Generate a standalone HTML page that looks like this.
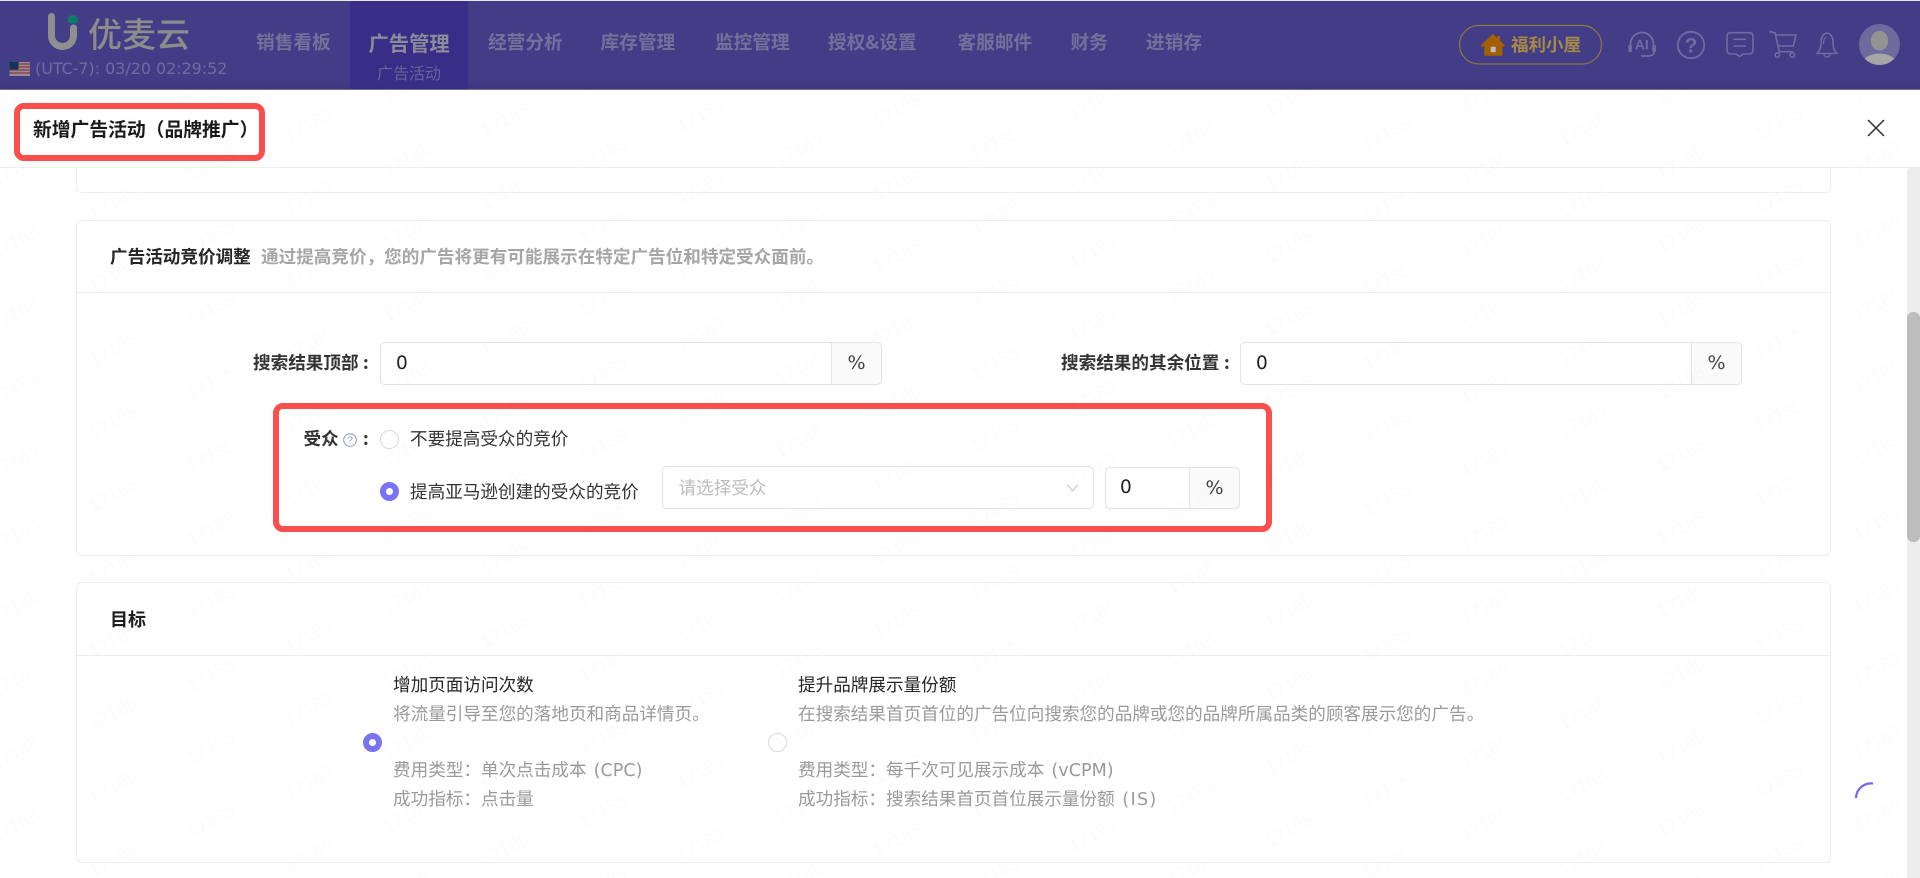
<!DOCTYPE html>
<html lang="zh">
<head>
<meta charset="utf-8">
<title>新增广告活动（品牌推广）</title>
<style>
html,body{margin:0;padding:0;width:1920px;height:878px;overflow:hidden;background:#fff}
body{position:relative;font-family:"DejaVu Sans","Noto Sans CJK SC",sans-serif;font-size:17.6px;color:#333}
.t{position:absolute;white-space:nowrap;line-height:24px;height:24px}
.b{font-weight:700}
.nav{position:absolute;top:30px;white-space:nowrap;line-height:24px;font-size:18.7px;font-weight:700;color:#72719a;font-family:"Noto Sans CJK SC",sans-serif}
.box{position:absolute;box-sizing:border-box;border:1px solid #eee;border-radius:6px}
.inp{position:absolute;box-sizing:border-box;border:1px solid #e3e3e3;border-radius:5px;background:transparent}
.add{position:absolute;box-sizing:border-box;border:1px solid #e3e3e3;border-radius:0 5px 5px 0;background:#fafafa;text-align:center;color:#444;font-size:19px}
.red{position:absolute;box-sizing:border-box;border:6px solid #fa4f4d;border-radius:10px}
.radio{position:absolute;box-sizing:border-box;width:19px;height:19px;border-radius:50%;border:1px solid #d9d9d9;background:#fff}
.radio.on{border:6.5px solid #7a73f6}
.h{font-family:"Noto Sans CJK SC",sans-serif}
.g{color:#9a9a9a}
.num{color:#222;font-size:18.5px}
</style>
</head>
<body>
<!-- header -->
<div style="position:absolute;left:0;top:0;width:1920px;height:90px;background:linear-gradient(#433d88 0,#433d88 85%,#3f3880 100%);border-top:1px solid #e8e8ee;border-bottom:1px solid #6f6e88;box-sizing:border-box"></div>
<div style="position:absolute;left:350px;top:1px;width:118px;height:88px;background:#382e87"></div>
<svg style="position:absolute;left:0;top:0" width="1920" height="90" viewBox="0 0 1920 90">
  <path d="M51.5 16.5V35.5A11 11 0 0 0 73.5 35.5V28" fill="none" stroke="#8f8f8f" stroke-width="7" stroke-linecap="round"/>
  <path d="M67.5 20C68 17 70 15 72.5 15C75 15 77.5 17 78 20C78 22.5 75.500 23.500 72.500 23.500C70 23.500 67.500 22.500 67.500 20Z" fill="#0b7c68"/>
  <g>
    <rect x="9.500" y="62" width="20.500" height="14" fill="#9b8a93"/>
    <path d="M9.500 64h20.500M9.500 67h20.500M9.500 70h20.500M9.500 73h20.500" stroke="#8a4a55" stroke-width="1.400"/>
    <rect x="9.500" y="62" width="9" height="7.500" fill="#14335a"/>
  </g>
  <!-- pill -->
  <rect x="1459.500" y="25.500" width="142" height="38.500" rx="19.200" fill="none" stroke="#8d7840" stroke-width="1.200"/>
  <path d="M1492.700 34L1480.700 45.500L1482.500 47L1484.300 45.500V55.700H1502.300V45.500L1503.500 47L1505 45.500L1500 40.500V36H1497V37.800Z" fill="#a35f00"/>
  <rect x="1490.700" y="46.700" width="5" height="5.500" fill="#bdbdbd"/>
  <!-- AI headset -->
  <g fill="none" stroke="#6f6ca4" stroke-width="1.800">
    <path d="M1630.500 47V44A11.500 11.500 0 0 1 1653.500 44V47"/>
    <path d="M1654 52C1654 55 1651 56 1648 56H1641"/>
  </g>
  <rect x="1628.300" y="45" width="3.600" height="7" rx="1" fill="#6f6ca4"/>
  <rect x="1652.300" y="45" width="3.600" height="7" rx="1" fill="#6f6ca4"/>
  <text x="1641.800" y="49.500" text-anchor="middle" font-family="Liberation Sans,sans-serif" font-size="14" font-weight="700" fill="#6f6ca4">AI</text>
  <!-- help -->
  <circle cx="1691" cy="45" r="13.200" fill="none" stroke="#6f6ca4" stroke-width="1.800"/>
  <text x="1691" y="52.500" text-anchor="middle" font-family="Liberation Sans,sans-serif" font-size="21" font-weight="700" fill="#6f6ca4">?</text>
  <!-- message -->
  <path d="M1730.500 32.700H1749.500A3.500 3.500 0 0 1 1753 36.200V50.500A3.500 3.500 0 0 1 1749.500 54H1743.500L1739.700 56.500L1736 54H1730.500A3.500 3.500 0 0 1 1727 50.500V36.200A3.500 3.500 0 0 1 1730.500 32.700Z" fill="none" stroke="#6f6ca4" stroke-width="1.600"/>
  <path d="M1733.500 39.300H1746M1733.500 46H1746" stroke="#6f6ca4" stroke-width="1.600" fill="none"/>
  <!-- cart -->
  <path d="M1769.300 31.700L1775 32.700L1779.300 51.700H1793.300M1776 35H1796L1793.300 46H1778.300" fill="none" stroke="#6f6ca4" stroke-width="1.600"/>
  <circle cx="1777.300" cy="55" r="2.200" fill="none" stroke="#6f6ca4" stroke-width="1.500"/>
  <circle cx="1792.300" cy="55" r="2.200" fill="none" stroke="#6f6ca4" stroke-width="1.500"/>
  <!-- bell -->
  <path d="M1817 53.500C1820 51 1821 47.500 1821 42.500C1821 36.500 1823.700 33.500 1827 33C1830.300 33.500 1833 36.500 1833 42.500C1833 47.500 1834 51 1837 53.500Z" fill="none" stroke="#6f6ca4" stroke-width="1.600" stroke-linejoin="round"/>
  <path d="M1824 54A3 3 0 0 0 1830 54" fill="none" stroke="#6f6ca4" stroke-width="1.500"/>
  <path d="M1823.500 44C1823.500 40.500 1824.500 38 1826.500 37" fill="none" stroke="#6f6ca4" stroke-width="1.200"/>
  <!-- avatar -->
  <clipPath id="av"><circle cx="1879.500" cy="44.500" r="20.500"/></clipPath>
  <circle cx="1879.500" cy="44.500" r="20.500" fill="#6d6a9e"/>
  <g clip-path="url(#av)">
    <ellipse cx="1879.500" cy="64.500" rx="17.500" ry="11" fill="#a6a6a6"/>
    <ellipse cx="1879.500" cy="40.700" rx="8.700" ry="9.800" fill="#939393"/>
  </g>
</svg>
<div class="t h" style="left:88px;top:12px;height:42px;line-height:42px;font-size:34px;color:#8c8c8c;font-weight:500">优麦云</div>
<div class="t" style="left:35px;top:57px;font-size:15.900px;color:#6f6ca0">(UTC-7): 03/20 02:29:52</div>
<div class="nav" style="left:256px">销售看板</div>
<div class="nav" style="left:368.500px;font-size:20.300px;color:#8b8b99">广告管理</div>
<div class="t h" style="left:377px;top:60px;font-size:16px;color:#64639a">广告活动</div>
<div class="nav" style="left:488px">经营分析</div>
<div class="nav" style="left:600.500px">库存管理</div>
<div class="nav" style="left:715px">监控管理</div>
<div class="nav" style="left:828px">授权&amp;设置</div>
<div class="nav" style="left:957.500px">客服邮件</div>
<div class="nav" style="left:1070.500px">财务</div>
<div class="nav" style="left:1146px">进销存</div>
<div class="t h b" style="left:1511px;top:33px;font-size:17.500px;color:#a58a44">福利小屋</div>

<!-- modal header -->
<div style="position:absolute;left:0;top:167px;width:1920px;height:1px;background:#eee"></div>
<div class="red" style="left:14px;top:103px;width:251px;height:58px"></div>
<div class="t h b" style="left:33px;top:117px;font-size:18.800px;color:#1a1a1a">新增广告活动（品牌推广）</div>
<svg style="position:absolute;left:1867px;top:119px" width="18" height="18" viewBox="0 0 18 18"><path d="M1 1L17 17M17 1L1 17" stroke="#333" stroke-width="1.500" fill="none"/></svg>

<!-- card 1 remainder -->
<div style="position:absolute;box-sizing:border-box;left:76px;top:168px;width:1755px;height:25px;border:1px solid #eee;border-top:0;border-radius:0 0 6px 6px"></div>

<!-- card 2 -->
<div class="box" style="left:76px;top:220px;width:1755px;height:336px"></div>
<div style="position:absolute;left:76px;top:292px;width:1755px;height:1px;background:#eee"></div>
<div class="t h b" style="left:110px;top:245px;color:#262626">广告活动竞价调整</div>
<div class="t h b" style="left:261px;top:245px;color:#a6a6a6">通过提高竞价，您的广告将更有可能展示在特定广告位和特定受众面前。</div>

<div class="t h b" style="left:253px;top:351px;color:#333">搜索结果顶部</div>
<div class="t h b" style="left:363px;top:351px;color:#333">:</div>
<div class="inp" style="left:380px;top:342px;width:502px;height:43px"></div>
<div class="t num" style="left:396px;top:352px">0</div>
<div class="add" style="left:831px;top:342px;width:51px;height:43px;line-height:41px">%</div>

<div class="t h b" style="left:1061px;top:351px;color:#333">搜索结果的其余位置</div>
<div class="t h b" style="left:1224px;top:351px;color:#333">:</div>
<div class="inp" style="left:1240px;top:342px;width:502px;height:43px"></div>
<div class="t num" style="left:1256px;top:352px">0</div>
<div class="add" style="left:1691px;top:342px;width:51px;height:43px;line-height:41px">%</div>

<div class="red" style="left:273px;top:403px;width:999px;height:129px"></div>
<div class="t h b" style="left:303.500px;top:427px;color:#333">受众</div>
<svg style="position:absolute;left:342px;top:432px" width="16" height="16" viewBox="0 0 16 16"><circle cx="8" cy="8" r="6.300" fill="none" stroke="#8f93c4" stroke-width="1"/><text x="8" y="11.500" text-anchor="middle" font-family="Liberation Sans,sans-serif" font-size="10" fill="#8f93c4">?</text></svg>
<div class="t h b" style="left:363px;top:427px;color:#333">:</div>
<div class="radio" style="left:380px;top:430px"></div>
<div class="t h" style="left:410px;top:427px;color:#333">不要提高受众的竞价</div>
<div class="radio on" style="left:380px;top:482px"></div>
<div class="t h" style="left:410px;top:480px;color:#333">提高亚马逊创建的受众的竞价</div>
<div class="inp" style="left:662px;top:466px;width:432px;height:43px"></div>
<div class="t h" style="left:678.500px;top:476px;color:#bdbdbd">请选择受众</div>
<svg style="position:absolute;left:1066px;top:484px" width="13" height="8" viewBox="0 0 13 8"><path d="M1.500 1L6.500 7L11.500 1" fill="none" stroke="#c4c4c4" stroke-width="1"/></svg>
<div class="inp" style="left:1105px;top:467px;width:135px;height:42px"></div>
<div class="t num" style="left:1120px;top:476px">0</div>
<div class="add" style="left:1189px;top:467px;width:51px;height:42px;line-height:40px">%</div>

<!-- card 3 -->
<div class="box" style="left:76px;top:582px;width:1755px;height:281px"></div>
<div style="position:absolute;left:76px;top:655px;width:1755px;height:1px;background:#eee"></div>
<div class="t h b" style="left:110px;top:607px;color:#1f1f1f;font-size:18px">目标</div>

<div class="radio on" style="left:363px;top:732.500px"></div>
<div class="t h" style="left:393px;top:673px;color:#262626">增加页面访问次数</div>
<div class="t h g" style="left:393px;top:702px">将流量引导至您的落地页和商品详情页。</div>
<div class="t g" style="left:393px;top:759px">费用类型：单次点击成本 <span style="margin-left:1.500px">(CPC)</span></div>
<div class="t g" style="left:393px;top:788px">成功指标：点击量</div>

<div class="radio" style="left:768px;top:732.500px"></div>
<div class="t h" style="left:798px;top:673px;color:#262626">提升品牌展示量份额</div>
<div class="t h g" style="left:798px;top:702px">在搜索结果首页首位的广告位向搜索您的品牌或您的品牌所属品类的顾客展示您的广告。</div>
<div class="t g" style="left:798px;top:759px">费用类型：每千次可见展示成本 <span style="margin-left:1.500px">(vCPM)</span></div>
<div class="t g" style="left:798px;top:788px">成功指标：搜索结果首页首位展示量份额 <span style="margin-left:2px;letter-spacing:1.300px">(IS)</span></div>

<!-- spinner -->
<svg style="position:absolute;left:1850px;top:778px" width="28" height="24" viewBox="0 0 28 24"><path d="M6 20A15 15 0 0 1 23 5.500" fill="none" stroke="#6f66f0" stroke-width="2.200"/></svg>

<!-- watermark -->
<svg style="position:absolute;left:0;top:0;pointer-events:none" width="1907" height="878" viewBox="0 0 1907 878">
  <defs>
    <pattern id="wm" patternUnits="userSpaceOnUse" width="196" height="73" patternTransform="skewY(-1.460) translate(162,224.400)">
      <text transform="translate(49,18) rotate(-27)" text-anchor="middle" y="6" font-family="Liberation Sans,sans-serif" font-size="18.500" fill="#000" fill-opacity=".012">17185</text>
      <text transform="translate(147,54.500) rotate(-27)" text-anchor="middle" y="6" font-family="Liberation Sans,sans-serif" font-size="18.500" fill="#000" fill-opacity=".012">17185</text>
    </pattern>
  </defs>
  <rect x="0" y="91" width="1907" height="787" fill="url(#wm)"/>
</svg>

<!-- scrollbar -->
<div style="position:absolute;left:1907px;top:168px;width:13px;height:710px;background:#ededed;border-radius:3px 0 0 0"></div>
<div style="position:absolute;left:1907px;top:312px;width:13px;height:230px;background:#bdbdbd;border-radius:6px"></div>
</body>
</html>
